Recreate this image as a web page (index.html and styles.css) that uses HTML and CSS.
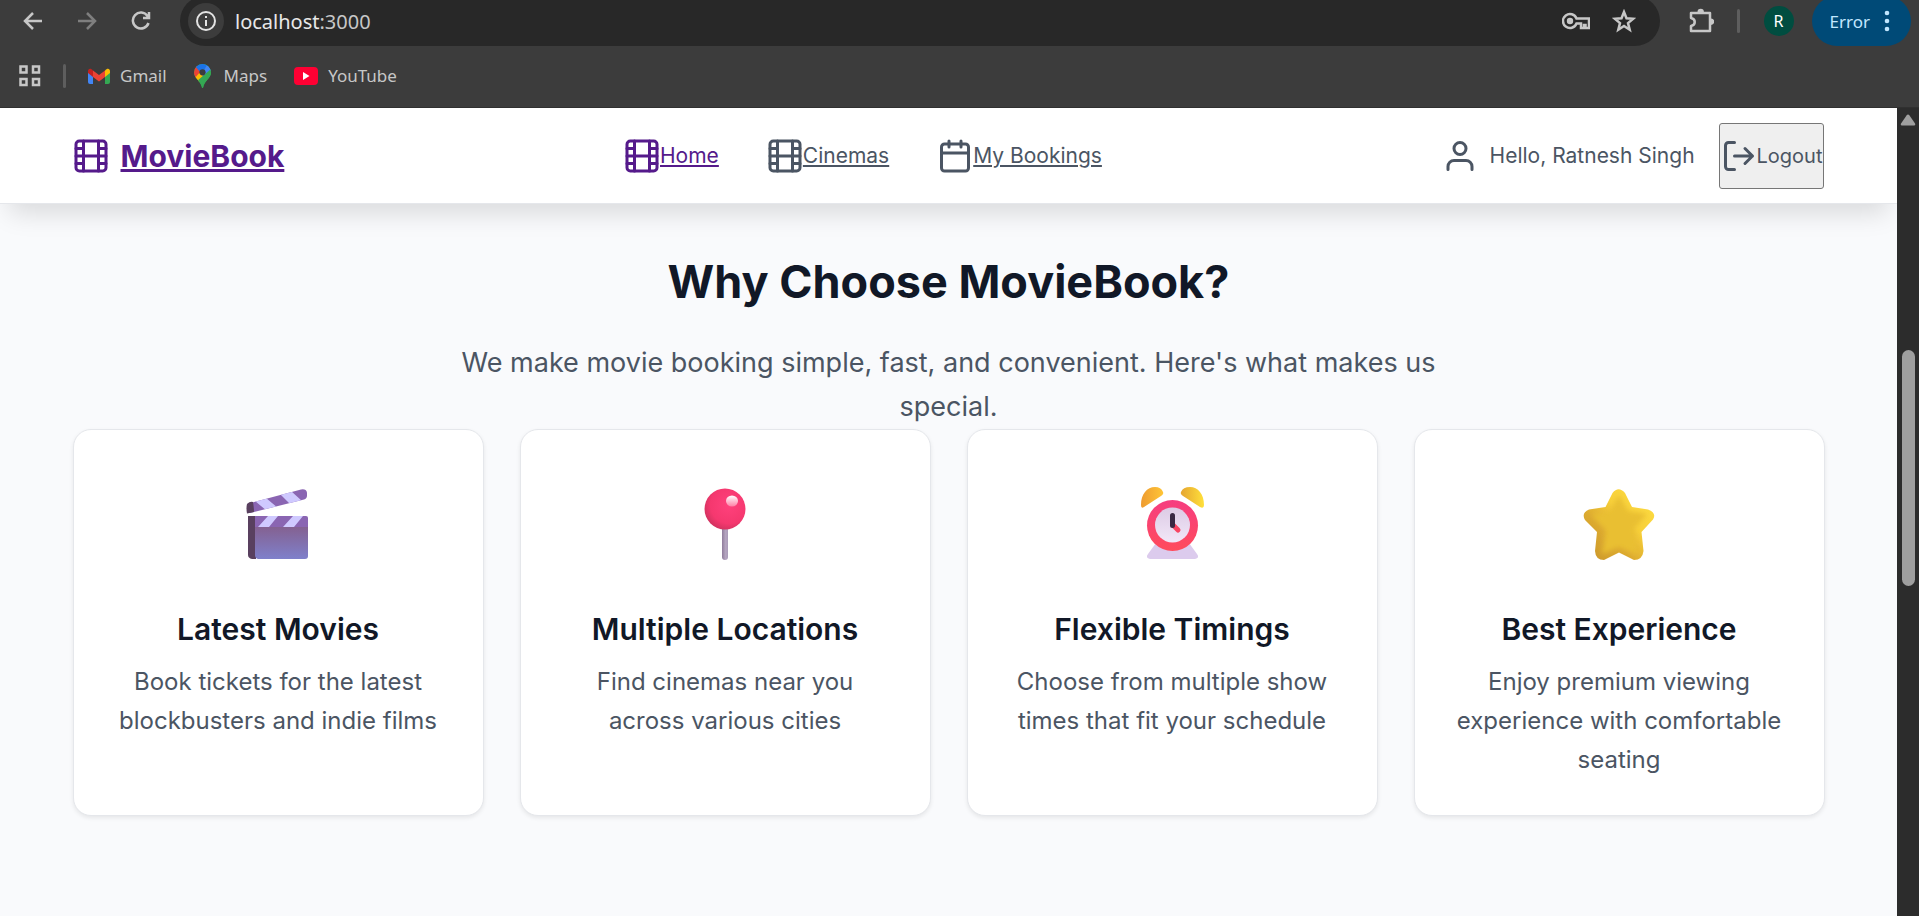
FILE: index.html
```html
<!DOCTYPE html>
<html lang="en">
<head>
<meta charset="utf-8">
<title>MovieBook</title>
<link rel="stylesheet" href="styles.css">
</head>
<body>
<svg class="defs" width="0" height="0" aria-hidden="true">
  <symbol id="film" viewBox="0 0 24 24"><rect x="2" y="2" width="20" height="20" rx="2.2"/><path d="M7 2v20M17 2v20M2 12h20M2 7h5M2 17h5M17 17h5M17 7h5"/></symbol>
  <symbol id="calendar" viewBox="0 0 24 24"><rect x="3" y="4" width="18" height="18" rx="2"/><path d="M16 2v4M8 2v4M3 10h18"/></symbol>
  <symbol id="user" viewBox="0 0 24 24"><path d="M20 21v-2a4 4 0 0 0-4-4H8a4 4 0 0 0-4 4v2"/><circle cx="12" cy="7" r="4"/></symbol>
  <symbol id="logout" viewBox="0 0 24 24"><path d="M9 21H5a2 2 0 0 1-2-2V5a2 2 0 0 1 2-2h4M16 17l5-5-5-5M21 12H9"/></symbol>
</svg>
<div class="browser">
  <div class="toolbar">
    <div class="history">
      <button class="tool" aria-label="Back"><svg width="20" height="20" viewBox="0 0 20 20"><path d="M19 10H2M10 2L2 10l8 8"/></svg></button>
      <button class="tool dim" aria-label="Forward"><svg width="20" height="20" viewBox="0 0 20 20"><path d="M1 10h17M10 2l8 8-8 8"/></svg></button>
      <button class="tool" aria-label="Reload"><svg width="20" height="20" viewBox="0 0 20 20"><path d="M17.5 12A8 8 0 1 1 16.500 5L18 7M18 1v6h-6"/></svg></button>
    </div>
    <div class="address">
      <button class="site-info" aria-label="Site information"><svg width="22" height="22" viewBox="0 0 22 22"><circle cx="11" cy="11" r="9"/><path d="M11 10v6M11 6v2"/></svg></button>
      <span class="url">localhost<span class="port">:3000</span></span>
      <button class="tool key" aria-label="Passwords"><svg width="28" height="18" viewBox="0 0 28 18"><path d="M14.500 6.500A7 7 0 1 0 14.500 11.500H19V16h3v-3h1.500v3H27V6.500z"/><circle cx="8" cy="9" r="3.200" class="solid"/></svg></button>
      <button class="tool" aria-label="Bookmark"><svg width="24" height="24" viewBox="0 0 24 24"><path d="M12 3l2.500 6.300 6.700.5-5.200 4.300 1.700 6.600L12 17l-5.700 3.700L8 14.100 2.800 9.800l6.700-.5z"/></svg></button>
    </div>
    <button class="tool puzzle" aria-label="Extensions"><svg width="26" height="26" viewBox="0 0 26 26"><path stroke-linejoin="round" d="M3 5h19v18H3v-5c5-1 5-7 0-8z"/><path class="solid" d="M9.500 4a3.200 3.200 0 0 1 6.400 0zM23 10.500a3.200 3.200 0 0 1 0 6.400z"/></svg></button>
    <span class="rule"></span>
    <button class="avatar" aria-label="Profile">R</button>
    <button class="error">Error<svg width="6" height="24" viewBox="0 0 6 24"><circle cx="3" cy="4" r="2.300"/><circle cx="3" cy="12" r="2.300"/><circle cx="3" cy="20" r="2.300"/></svg></button>
  </div>
  <div class="bookmarks">
    <button class="tool apps" aria-label="Apps"><svg width="22" height="22" viewBox="0 0 22 22"><path d="M1.500 1.500h6v6h-6zM14 1.500h6v6h-6zM1.500 14h6v6h-6zM14 14h6v6h-6z"/></svg></button>
    <span class="rule"></span>
    <a class="mark" href="#gmail"><svg width="22" height="16" viewBox="0 0 22 16"><path fill="#4285f4" d="M0 4l5 4v8H2a2 2 0 0 1-2-2z"/><path fill="#34a853" d="M22 4l-5 4v8h3a2 2 0 0 0 2-2z"/><path fill="#fbbc04" d="M17 2.500C19 0 22 0 22 3.500V5l-5 4z"/><path fill="#c5221f" d="M0 5V3.500C0 0 3 0 5 2.500V9z"/><path fill="#ea4335" d="M5 2.500l6 4.500 6-4.500V9l-6 4.500L5 9z"/></svg>Gmail</a>
    <a class="mark" href="#maps"><svg width="20" height="24" viewBox="0 0 20 24"><clipPath id="pin"><path d="M8.500 0a8.500 8.500 0 0 1 8.500 8.500c0 6-6.500 7.500-8 15.500h-1C6.500 16 0 14.500 0 8.500A8.500 8.500 0 0 1 8.500 0z"/></clipPath><g clip-path="url(#pin)"><path fill="#34a853" d="M0 0h17v24H0z"/><path fill="#fbbc04" d="M-1 14l7-8 5 5-8 10z"/><path fill="#ea4335" d="M-1 2l4 0 4 5-8 9z"/><path fill="#1a73e8" d="M1 2L9-1l5 3-7 7z"/><path fill="#4285f4" d="M13 1l5 4-8 9-2-4z"/><path fill="#34a853" d="M17 5v10L9 24 3 17z"/></g><circle cx="8.500" cy="8.300" r="3.100" fill="#3c3c3c"/></svg>Maps</a>
    <a class="mark" href="#youtube"><svg width="24" height="18" viewBox="0 0 24 18"><rect width="24" height="18" rx="4" fill="#ff0033"/><path fill="#fff" d="M9 5l6.500 4L9 13z"/></svg>YouTube</a>
  </div>
</div>
<div class="viewport">
  <div class="page">
    <header class="site-header">
      <div class="container header-row">
        <a class="brand visited" href="#home"><svg class="icon"><use href="#film"/></svg><span>MovieBook</span></a>
        <nav class="links">
          <a class="visited" href="#home"><svg class="icon"><use href="#film"/></svg><span>Home</span></a>
          <a href="#cinemas"><svg class="icon"><use href="#film"/></svg><span>Cinemas</span></a>
          <a href="#bookings"><svg class="icon"><use href="#calendar"/></svg><span>My Bookings</span></a>
        </nav>
        <div class="account">
          <span class="hello"><svg class="icon"><use href="#user"/></svg>Hello, Ratnesh Singh</span>
          <button class="logout"><svg class="icon"><use href="#logout"/></svg>Logout</button>
        </div>
      </div>
    </header>
    <main class="container features">
      <h1>Why Choose MovieBook?</h1>
      <p class="lead">We make movie booking simple, fast, and convenient. Here's what makes us special.</p>
      <div class="cards">
        <article class="card">
          <svg class="art" viewBox="0 0 72 72" aria-hidden="true">
            <defs>
              <linearGradient id="slate" x2="0" y2="1"><stop offset="0" stop-color="#84608f"/><stop offset="1" stop-color="#7f80cb"/></linearGradient>
              <clipPath id="arm"><path d="M7 15L61 .5q5-1 6 3v3q0 3-3 4L10 24q-3 0-3-4z"/></clipPath>
              <clipPath id="bar"><path d="M12 27h54q2 0 2 2v9H12z"/></clipPath>
            </defs>
            <g transform="translate(-2 0)">
              <g clip-path="url(#arm)"><path fill="#8a65b2" d="M0 0h72v30H0z"/><path fill="#cfc9ff" d="M15 12l11-3 12 10-11 3zM40 5l11-3 11 10-12 3z"/></g>
              <path fill="#59405f" d="M7 15q3-3 6-2 1 6 1 10l-7 1.500q-1-6 0-9.500z"/>
              <path fill="#59405f" d="M8 27h8v43h-4q-4-1-4-4z"/>
              <path fill="url(#slate)" d="M15 37h53v30q0 3-3 3H18q-3-1-3-4z"/>
              <g clip-path="url(#bar)"><path fill="#8a65b2" d="M15 27h53v11H15z"/><path fill="#cfc9ff" d="M28 27h10l-9 11H18zM53 27h10l-9 11H43z"/></g>
            </g>
          </svg>
          <h2>Latest Movies</h2>
          <p>Book tickets for the latest blockbusters and indie films</p>
        </article>
        <article class="card">
          <svg class="art" viewBox="0 0 72 72" aria-hidden="true">
            <defs><radialGradient id="ball" cx=".6" cy=".4" r=".65"><stop offset="0" stop-color="#ff417c"/><stop offset=".7" stop-color="#f5386f"/><stop offset="1" stop-color="#cf325e"/></radialGradient><linearGradient id="needle"><stop offset="0" stop-color="#8f7c9b"/><stop offset=".6" stop-color="#b5a5c0"/><stop offset="1" stop-color="#a99bb8"/></linearGradient><linearGradient id="glint" x2="0" y2="1"><stop offset="0" stop-color="#fff"/><stop offset="1" stop-color="#ff7fa5"/></linearGradient></defs>
            <rect x="33" y="36" width="6" height="35" rx="3" fill="url(#needle)"/>
            <circle cx="36" cy="20" r="20.500" fill="url(#ball)"/>
            <ellipse cx="43" cy="12" rx="6" ry="5.500" fill="url(#glint)"/>
          </svg>
          <h2>Multiple Locations</h2>
          <p>Find cinemas near you across various cities</p>
        </article>
        <article class="card">
          <svg class="art" viewBox="0 0 72 72" aria-hidden="true">
            <defs><linearGradient id="bell"><stop offset="0" stop-color="#ee9b31"/><stop offset="1" stop-color="#ffc536"/></linearGradient><linearGradient id="bell2"><stop offset="0" stop-color="#e5a530"/><stop offset="1" stop-color="#ffe03b"/></linearGradient><linearGradient id="ring" x2="0" y2="1"><stop offset="0" stop-color="#f63d80"/><stop offset="1" stop-color="#ff4b5c"/></linearGradient><linearGradient id="face" x2="0" y2="1"><stop offset="0" stop-color="#dccbe5"/><stop offset="1" stop-color="#f2e7f8"/></linearGradient></defs>
            <path fill="#dccbed" d="M20 54h33l8 11q3 4-2 5H14q-5-1-2-5z"/>
            <path fill="url(#bell)" d="M5 16C5 5 11-2 19-2q6 0 8 5 1 2-2 4L8 18q-3 2-3-2z"/>
            <path fill="url(#bell2)" d="M68 16C68 5 62-2 54-2q-7 0-9 5-1 2 2 4l17 11q4 2 4-2z"/>
            <circle cx="36.500" cy="36.500" r="25.500" fill="url(#ring)"/><circle cx="36.500" cy="36" r="17.500" fill="url(#face)"/>
            <path d="M37 36l5 5" stroke="#f84462" stroke-width="5" stroke-linecap="round"/><path d="M36.500 26.500v10" stroke="#392843" stroke-width="5" stroke-linecap="round"/>
          </svg>
          <h2>Flexible Timings</h2>
          <p>Choose from multiple show times that fit your schedule</p>
        </article>
        <article class="card">
          <svg class="art" viewBox="0 0 72 72" aria-hidden="true">
            <defs><linearGradient id="gold" x1="0" y1="1" x2="1" y2="0"><stop offset="0" stop-color="#c9952b"/><stop offset=".35" stop-color="#dcaa30"/><stop offset=".6" stop-color="#f7cf3a"/><stop offset="1" stop-color="#ffe044"/></linearGradient><filter id="soft"><feGaussianBlur stdDeviation="2.500"/></filter></defs>
            <path fill="url(#gold)" d="M29.500 4q6-7.500 12.500 0l7 14 16 2.500q9 3.500 5 10L58.500 43l2 19q-1 9-9.500 9L36 63.500 21 71q-8.500 0-9-9l2-19L2 31q-4-7 4-10.500L22.500 18z"/>
            <path fill="#e9bf33" filter="url(#soft)" d="M36 6l9 16 19 3-13 15 4 25-19-7-17 7 4-24L9 26l17-3z"/>
          </svg>
          <h2>Best Experience</h2>
          <p>Enjoy premium viewing experience with comfortable seating</p>
        </article>
      </div>
    </main>
  </div>
  <div class="scrollbar" aria-hidden="true">
    <svg width="16" height="12" viewBox="0 0 16 12"><path d="M6.500 1.500q1.500-2 3 0L15 9.500q.8 2-1 2H2q-1.800 0-1-2z"/></svg>
    <span class="thumb"></span>
  </div>
</div>
</body>
</html>
```
FILE: styles.css
```css
* { box-sizing: border-box; }
body {
  margin: 0;
  height: 100vh;
  display: flex;
  flex-direction: column;
  overflow: hidden;
  font-family: Inter, "Liberation Sans", sans-serif;
  color: #4b5563;
}
button { font: inherit; color: inherit; }
.defs { position: absolute; }

/* Browser chrome */
.browser {
  background: #3c3c3c;
  border-bottom: 1px solid #303030;
  font-family: "Noto Sans", "Open Sans", sans-serif;
  font-size: 17px;
  color: #c7c7c7;
}
.toolbar { display: flex; align-items: center; height: 46px; padding: 0 8px 4px 13px; }
.history { display: flex; gap: 14px; margin-right: 19px; }
.tool {
  display: grid;
  place-items: center;
  width: 40px;
  height: 40px;
  padding: 0;
  border: 0;
  background: none;
}
.tool svg, .site-info svg { fill: none; stroke: #c7c7c7; stroke-width: 2.5; }
.tool .solid { fill: #c7c7c7; stroke: none; }
.tool.dim svg { stroke: #7f7f7f; }
.address {
  flex: 1;
  display: flex;
  align-items: center;
  gap: 8px;
  height: 50px;
  padding: 0 16px 0 8px;
  border-radius: 25px;
  background: #282828;
}
.site-info {
  display: grid;
  place-items: center;
  width: 36px;
  height: 36px;
  padding: 0;
  border: 0;
  border-radius: 50%;
  background: #3c3c3c;
}
.site-info svg { stroke: #e3e3e3; stroke-width: 2; }
.url { flex: 1; margin-left: 3px; font-size: 20px; color: #e8e8e8; }
.port { color: #c7c7c7; }
.puzzle { margin: 0 16px 0 21px; }
.rule { width: 3px; height: 24px; border-radius: 2px; background: #5e5e5e; }
.avatar {
  width: 30px;
  height: 30px;
  margin: 0 18px 0 24px;
  padding: 0;
  border: 0;
  border-radius: 50%;
  background: #004d40;
  color: #fff;
  font-size: 16px;
}
.error {
  display: flex;
  align-items: center;
  gap: 14px;
  height: 50px;
  padding: 0 21px 0 18px;
  border: 0;
  border-radius: 25px;
  background: #004a77;
  color: #c2e7ff;
}
.error svg { fill: #c2e7ff; }
.bookmarks { display: flex; align-items: center; height: 61px; padding: 0 10px 2px; }
.apps { margin-right: 13px; }
.mark { display: flex; align-items: center; gap: 10px; margin-left: 27px; color: inherit; text-decoration: none; }
.bookmarks .rule + .mark { margin-left: 22px; }

/* Page */
.viewport { flex: 1; min-height: 0; display: flex; }
.page { flex: 1; background: #f9fafc; }
.container { width: 100%; max-width: 1824px; margin: 0 auto; padding: 0 36px; }
.site-header {
  background: #fff;
  border-bottom: 1px solid #e5e7eb;
  box-shadow: 0 18px 24px -9px rgba(0, 0, 0, .13);
}
.header-row {
  display: flex;
  align-items: center;
  justify-content: space-between;
  height: 95px;
  font-size: 21px;
}
.header-row a { display: flex; align-items: center; color: #4b5563; text-decoration: none; }
.header-row a span { text-decoration: underline; }
.header-row a.visited { color: #551a8b; }
.icon { width: 36px; height: 36px; fill: none; stroke: currentColor; stroke-width: 2; stroke-linecap: round; stroke-linejoin: round; }
.header-row .brand { gap: 12px; font-size: 30px; font-weight: 700; }
.links { display: flex; gap: 48px; }
.account { display: flex; align-items: center; gap: 24px; }
.hello { display: flex; align-items: center; gap: 12px; }
.logout {
  display: flex;
  align-items: center;
  height: 66px;
  padding: 0 1px;
  border: 1px solid #767676;
  border-radius: 3px;
  background: #efefef;
  font-size: 20px;
}
.features { padding-top: 48px; text-align: center; }
h1 { margin: 0 0 29px; font-size: 45px; line-height: 60px; font-weight: 700; color: #111827; }
.lead { max-width: 1008px; margin: 0 auto; font-size: 27px; line-height: 44px; }
.cards { display: grid; grid-template-columns: repeat(4, 1fr); gap: 36px; }
.card {
  padding: 36px;
  border: 1px solid #e5e7eb;
  border-radius: 18px;
  background: #fff;
  box-shadow: 0 2px 4px rgba(0, 0, 0, .08);
}
.art { display: block; width: 72px; height: 72px; margin: 23px auto 47px; overflow: visible; }
h2 { margin: 0 0 12px; font-size: 30px; line-height: 42px; font-weight: 600; color: #111827; }
.card p { margin: 0; font-size: 24px; line-height: 39px; }

.scrollbar { display: flex; flex-direction: column; align-items: center; width: 22px; padding-top: 6px; background: #2c2c2c; }
.scrollbar svg { fill: #9f9f9f; }
.thumb { width: 13px; height: 236px; margin-top: 224px; border-radius: 7px; background: #9f9f9f; }
```
